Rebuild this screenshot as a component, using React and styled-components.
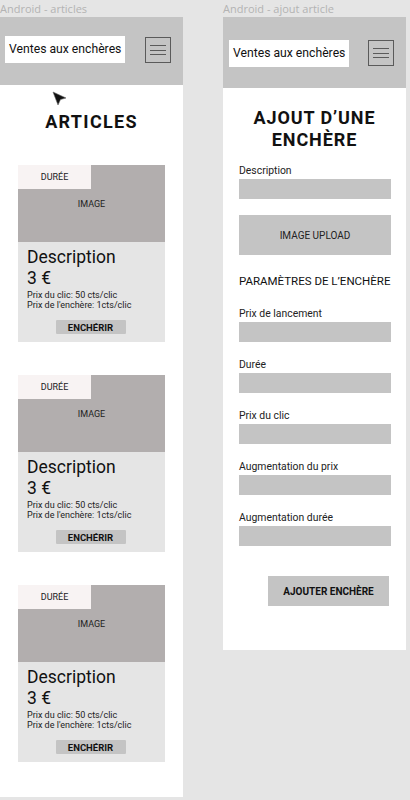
import styled, { createGlobalStyle } from 'styled-components';

const GlobalStyle = createGlobalStyle`
  html, body {
    margin: 0;
    padding: 0;
    background: #e5e5e5;
    font-family: Roboto, "Liberation Sans", sans-serif;
  }
`;

const Page = styled.div`
  display: flex;
  gap: 40px;
  width: 410px;
  height: 800px;
  overflow: hidden;
`;

const Column = styled.div`
  display: flex;
  flex-direction: column;
  width: 183px;
`;

const BoardLabel = styled.div`
  height: 17px;
  line-height: 17px;
  font-size: 11px;
  color: #b3b3b3;
  white-space: nowrap;
  font-family: "Open Sans", "Liberation Sans", sans-serif;
`;

const Board = styled.div`
  position: relative;
  background: #fff;
  height: ${p => p.$height}px;
  display: flex;
  flex-direction: column;
`;

const Header = styled.div`
  height: ${p => p.$height}px;
  background: #c4c4c4;
  display: flex;
  justify-content: space-between;
  align-items: flex-start;
  padding: ${p => p.$top}px 12px 0 ${p => p.$left}px;
  box-sizing: border-box;
  flex-shrink: 0;
`;

const Brand = styled.div`
  width: 120px;
  height: 27px;
  background: #fff;
  font-size: 12.2px;
  line-height: 27px;
  padding-left: 4px;
  box-sizing: border-box;
  white-space: nowrap;
  color: #111;
`;

const Burger = styled.div`
  width: 26px;
  height: 26px;
  border: 1px solid #5a5a5a;
  box-sizing: border-box;
  margin-top: ${p => p.$offset || 0}px;
  display: flex;
  flex-direction: column;
  justify-content: center;
  align-items: center;
  gap: 3.5px;
`;

const BurgerLine = styled.span`
  width: 16px;
  height: 1px;
  background: #5a5a5a;
`;

const Cursor = styled.svg`
  position: absolute;
  left: 52px;
  top: 74px;
`;

const PageTitle = styled.h1`
  margin: ${p => p.$margin};
  font-size: ${p => p.$size}px;
  line-height: ${p => p.$line}px;
  font-weight: 700;
  letter-spacing: ${p => p.$spacing}px;
  text-align: center;
  color: #111;
`;

const CardList = styled.div`
  display: flex;
  flex-direction: column;
  gap: 33px;
  padding: 0 18px;
`;

const Card = styled.div`
  background: #e5e5e5;
  height: 177px;
  display: flex;
  flex-direction: column;
`;

const ImageArea = styled.div`
  position: relative;
  height: 77px;
  background: #b2aeae;
  display: flex;
  align-items: center;
  justify-content: center;
  font-size: 9px;
  color: #222;
  padding-top: 1px;
  box-sizing: border-box;
`;

const DurationTag = styled.div`
  position: absolute;
  left: 0;
  top: 0;
  width: 73px;
  height: 24px;
  background: #f8f3f3;
  display: flex;
  align-items: center;
  justify-content: center;
  font-size: 9px;
  color: #222;
`;

const CardBody = styled.div`
  padding: 5px 0 0 9px;
  display: flex;
  flex-direction: column;
`;

const CardTitle = styled.div`
  font-size: 17.5px;
  line-height: 20.5px;
  color: #111;
`;

const CardInfo = styled.div`
  margin-top: 2px;
  font-size: 9px;
  line-height: 10px;
  color: #222;
`;

const BidButton = styled.div`
  align-self: center;
  margin: 10px 0 0 -11px;
  width: 70px;
  height: 14px;
  background: #c4c4c4;
  border-radius: 1px;
  font-size: 9.5px;
  font-weight: 700;
  display: flex;
  align-items: center;
  justify-content: center;
  color: #111;
`;

const Form = styled.div`
  display: flex;
  flex-direction: column;
  padding: 0 15px 0 16px;
`;

const Field = styled.div`
  display: flex;
  flex-direction: column;
  gap: 2px;
  margin-top: ${p => p.$top}px;
`;

const FieldLabel = styled.div`
  font-size: 10.4px;
  line-height: 12px;
  color: #222;
`;

const Input = styled.div`
  height: 20px;
  background: #c4c4c4;
`;

const Upload = styled.div`
  margin-top: 16px;
  height: 40px;
  background: #c4c4c4;
  display: flex;
  align-items: center;
  justify-content: center;
  font-size: 10px;
  color: #222;
`;

const SectionTitle = styled.div`
  margin-top: 19px;
  font-size: 11.5px;
  line-height: 14px;
  white-space: nowrap;
  color: #111;
`;

const SubmitButton = styled.div`
  align-self: flex-end;
  margin: 30px 2px 0 0;
  width: 121px;
  height: 30px;
  background: #c4c4c4;
  font-size: 10px;
  font-weight: 700;
  display: flex;
  align-items: center;
  justify-content: center;
  color: #111;
`;

const articles = [1, 2, 3];

const fields = [
  'Prix de lancement',
  'Durée',
  'Prix du clic',
  'Augmentation du prix',
  'Augmentation durée',
];

function Hamburger({ offset }) {
  return (
    <Burger $offset={offset}>
      <BurgerLine />
      <BurgerLine />
      <BurgerLine />
    </Burger>
  );
}

function ArticleCard() {
  return (
    <Card>
      <ImageArea>
        <DurationTag>DURÉE</DurationTag>
        IMAGE
      </ImageArea>
      <CardBody>
        <CardTitle>
          Description
          <br />3 €
        </CardTitle>
        <CardInfo>
          Prix du clic: 50 cts/clic
          <br />
          Prix de l'enchère: 1cts/clic
        </CardInfo>
        <BidButton>ENCHÉRIR</BidButton>
      </CardBody>
    </Card>
  );
}

export default function App() {
  return (
    <>
      <GlobalStyle />
      <Page>
        <Column>
          <BoardLabel>Android - articles</BoardLabel>
          <Board $height={780}>
            <Header $height={68} $top={19} $left={5}>
              <Brand>Ventes aux enchères</Brand>
              <Hamburger offset={1} />
            </Header>
            <Cursor width="16" height="16" viewBox="0 0 16 16">
              <path d="M1 1 L14 7 L8.5 8.5 L6 14 Z" fill="#111" stroke="#666" strokeWidth="0.6" />
            </Cursor>
            <PageTitle $margin="26px 0 32px" $size={18} $line={22} $spacing={1.3}>
              ARTICLES
            </PageTitle>
            <CardList>
              {articles.map(id => (
                <ArticleCard key={id} />
              ))}
            </CardList>
          </Board>
        </Column>
        <Column>
          <BoardLabel>Android - ajout article</BoardLabel>
          <Board $height={633}>
            <Header $height={71} $top={23} $left={6}>
              <Brand>Ventes aux enchères</Brand>
              <Hamburger />
            </Header>
            <PageTitle $margin="19px 0 0" $size={18} $line={22} $spacing={0.9}>
              AJOUT D’UNE
              <br />
              ENCHÈRE
            </PageTitle>
            <Form>
              <Field $top={14}>
                <FieldLabel>Description</FieldLabel>
                <Input />
              </Field>
              <Upload>IMAGE UPLOAD</Upload>
              <SectionTitle>PARAMÈTRES DE L’ENCHÈRE</SectionTitle>
              {fields.map((label, i) => (
                <Field key={label} $top={i === 0 ? 20 : 17}>
                  <FieldLabel>{label}</FieldLabel>
                  <Input />
                </Field>
              ))}
              <SubmitButton>AJOUTER ENCHÈRE</SubmitButton>
            </Form>
          </Board>
        </Column>
      </Page>
    </>
  );
}
